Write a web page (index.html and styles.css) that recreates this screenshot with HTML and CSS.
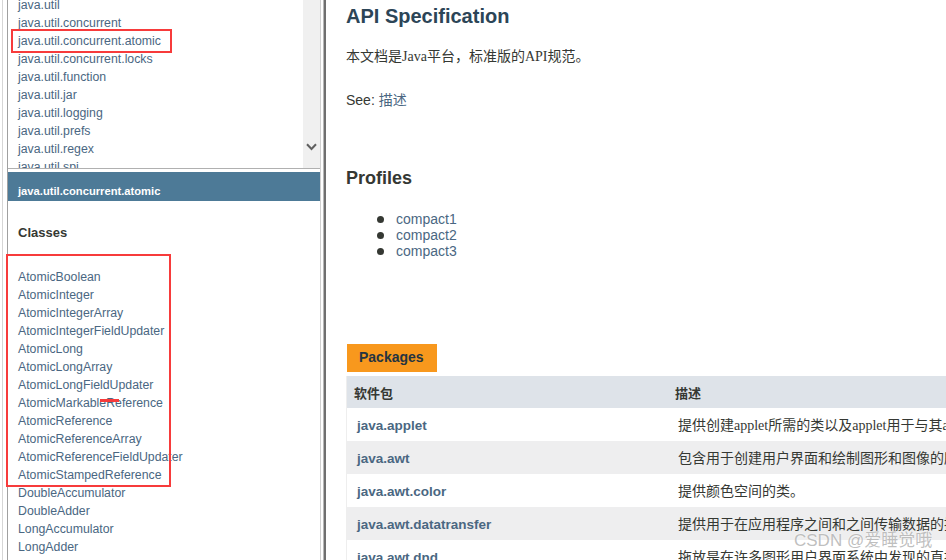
FILE: index.html
```html
<!DOCTYPE html>
<html lang="zh-CN">
<head>
<meta charset="utf-8">
<title>Java Platform SE 8 API</title>
<link rel="stylesheet" href="styles.css">
</head>
<body>
<div class="page">
  <div class="left-frame">
    <div class="panes">
      <div class="pkg-pane">
        <ul class="pkg-list">
          <li><a href="#">java.util</a></li>
          <li><a href="#">java.util.concurrent</a></li>
          <li><a href="#">java.util.concurrent.atomic</a></li>
          <li><a href="#">java.util.concurrent.locks</a></li>
          <li><a href="#">java.util.function</a></li>
          <li><a href="#">java.util.jar</a></li>
          <li><a href="#">java.util.logging</a></li>
          <li><a href="#">java.util.prefs</a></li>
          <li><a href="#">java.util.regex</a></li>
          <li><a href="#">java.util.spi</a></li>
          <li><a href="#">java.util.stream</a></li>
        </ul>
        <div class="scrollbar">
          <svg class="scroll-arrow" width="11" height="8" viewBox="0 0 11 8"><path d="M1 1.2 L5.5 6 L10 1.2" fill="none" stroke="#606060" stroke-width="2"/></svg>
        </div>
      </div>
      <div class="bar">java.util.concurrent.atomic</div>
      <div class="class-pane">
        <h2 class="class-title">Classes</h2>
        <ul class="class-list">
          <li><a href="#">AtomicBoolean</a></li>
          <li><a href="#">AtomicInteger</a></li>
          <li><a href="#">AtomicIntegerArray</a></li>
          <li><a href="#">AtomicIntegerFieldUpdater</a></li>
          <li><a href="#">AtomicLong</a></li>
          <li><a href="#">AtomicLongArray</a></li>
          <li><a href="#">AtomicLongFieldUpdater</a></li>
          <li><a href="#">AtomicMarkableReference</a></li>
          <li><a href="#">AtomicReference</a></li>
          <li><a href="#">AtomicReferenceArray</a></li>
          <li><a href="#">AtomicReferenceFieldUpdater</a></li>
          <li><a href="#">AtomicStampedReference</a></li>
          <li><a href="#">DoubleAccumulator</a></li>
          <li><a href="#">DoubleAdder</a></li>
          <li><a href="#">LongAccumulator</a></li>
          <li><a href="#">LongAdder</a></li>
        </ul>
      </div>
    </div>
  </div>
  <div class="divider"></div>
  <div class="right-frame">
    <h1 class="title">API Specification</h1>
    <p class="intro zh">本文档是Java平台，标准版的API规范。</p>
    <p class="see">See: <a href="#" class="zh-link">描述</a></p>
    <h2 class="profiles-title">Profiles</h2>
    <ul class="profiles">
      <li><a href="#">compact1</a></li>
      <li><a href="#">compact2</a></li>
      <li><a href="#">compact3</a></li>
    </ul>
    <div class="tab"><span>Packages</span></div>
    <table class="summary">
      <thead>
        <tr><th class="col-first">软件包</th><th class="col-last">描述</th></tr>
      </thead>
      <tbody>
        <tr><td class="col-first"><a href="#">java.applet</a></td><td class="col-last">提供创建applet所需的类以及applet用于与其applet上下文进行通信的类。</td></tr>
        <tr><td class="col-first"><a href="#">java.awt</a></td><td class="col-last">包含用于创建用户界面和绘制图形和图像的所有类。</td></tr>
        <tr><td class="col-first"><a href="#">java.awt.color</a></td><td class="col-last">提供颜色空间的类。</td></tr>
        <tr><td class="col-first"><a href="#">java.awt.datatransfer</a></td><td class="col-last">提供用于在应用程序之间和之间传输数据的接口和类。</td></tr>
        <tr><td class="col-first"><a href="#">java.awt.dnd</a></td><td class="col-last">拖放是在许多图形用户界面系统中发现的直接操作手势。</td></tr>
      </tbody>
    </table>
  </div>
</div>
<div class="mark mark-pkg"></div>
<div class="mark mark-classes"></div>
<div class="mark-dash"></div>
<div class="watermark">CSDN @爱睡觉哦</div>
</body>
</html>
```
FILE: styles.css
```css
html, body {
  margin: 0;
  height: 560px;
  overflow: hidden;
}
body {
  position: relative;
  background: #fff;
  color: #353833;
  font-family: "Liberation Sans", Arial, "Noto Sans CJK SC", sans-serif;
}
a {
  color: #4a6782;
  text-decoration: none;
}
.page {
  display: flex;
  height: 560px;
}

/* left frame */
.left-frame {
  width: 321px;
  flex: none;
  display: flex;
  padding-left: 7px;
  box-sizing: border-box;
  background: linear-gradient(to right, #fff 0 2px, #d6d6d6 2px 3px, #fff 3px) no-repeat;
  background-size: 7px 100%;
}
.panes {
  flex: 1;
  min-width: 0;
  display: flex;
  flex-direction: column;
  border-left: 1px solid #a0a0a0;
  border-right: 1px solid #d0d0d0;
}
.pkg-pane {
  flex: none;
  height: 168px;
  display: flex;
  overflow: hidden;
  border-bottom: 1px solid #b0b0b0;
}
.pkg-list {
  flex: 1;
  margin: -4px 0 0;
  padding: 0 0 0 10px;
  list-style: none;
  font-size: 12.3px;
  line-height: 18px;
  white-space: nowrap;
}
.scrollbar {
  width: 17px;
  flex: none;
  background: #f0f0f0;
  display: flex;
  flex-direction: column;
  justify-content: flex-end;
  align-items: center;
  padding-bottom: 17px;
  box-sizing: border-box;
}
.scroll-arrow {
  display: block;
}
.bar {
  flex: none;
  margin-top: 3px;
  height: 29px;
  box-sizing: border-box;
  padding: 13px 0 0 10px;
  background: #4d7a97;
  color: #fff;
  font-size: 11.2px;
  font-weight: bold;
  line-height: 13px;
}
.class-pane {
  flex: 1;
  padding-left: 10px;
}
.class-title {
  margin: 24px 0 0;
  font-size: 13px;
  line-height: 16px;
  font-weight: bold;
}
.class-list {
  margin: 27px 0 0;
  padding: 0;
  list-style: none;
  font-size: 12.3px;
  line-height: 18px;
}

/* divider */
.divider {
  width: 5px;
  flex: none;
  background: linear-gradient(to right, #fff 0 2px, #b8b8b8 2px 3px, #707070 3px 5px);
}

/* right frame */
.right-frame {
  flex: 1;
  min-width: 0;
  overflow: hidden;
  padding: 4px 0 0 20px;
  font-size: 14px;
}
.title {
  margin: 0;
  color: #2c4557;
  font-size: 20px;
  line-height: 24px;
  font-weight: bold;
}
.zh {
  font-family: "Liberation Serif", "Noto Sans CJK SC", serif;
}
.zh-link {
  font-family: "Noto Sans CJK SC", sans-serif;
}
.intro {
  margin: 19px 0 0;
  line-height: 20px;
}
.see {
  margin: 22px 0 0;
  line-height: 20px;
}
.profiles-title {
  margin: 57px 0 0;
  font-size: 18px;
  line-height: 22px;
  font-weight: bold;
}
.profiles {
  margin: 22px 0 0;
  padding: 0 0 0 31px;
  list-style: none;
  line-height: 16px;
}
.profiles li {
  display: flex;
  align-items: center;
}
.profiles li::before {
  content: "";
  width: 7px;
  height: 7px;
  border-radius: 50%;
  background: #353833;
  margin-right: 12px;
}
.tab {
  margin-top: 85px;
  height: 28px;
  display: flex;
}
.tab span {
  margin-left: 1px;
  padding: 4px 13px 0 12px;
  background: #f8981d;
  color: #253441;
  font-size: 14px;
  font-weight: bold;
  line-height: 18px;
}
.summary {
  margin-top: 4px;
  width: 900px;
  table-layout: fixed;
  border-collapse: separate;
  border-spacing: 0;
  border-left: 1px solid #eee;
}
.summary th {
  background: #dee3e9;
  text-align: left;
  font-family: "Noto Sans CJK SC", sans-serif;
  font-size: 13px;
  font-weight: bold;
  line-height: 21px;
  padding: 6px 3px 5px 7px;
  color: #353833;
}
.summary th.col-first {
  width: 321px;
  box-sizing: border-box;
}
.summary td {
  padding: 7px 3px 5px 10px;
  line-height: 21px;
  white-space: nowrap;
  overflow: hidden;
}
.summary td.col-first a {
  font-weight: bold;
  font-size: 13.5px;
}
.summary td.col-last {
  font-family: "Liberation Serif", "Noto Sans CJK SC", serif;
  font-size: 14px;
}
.summary tbody tr:nth-child(even) {
  background: #eeeeef;
}

/* annotations */
.mark {
  position: absolute;
  border: 2px solid #f73b3b;
}
.mark-pkg {
  left: 11px;
  top: 29px;
  width: 157px;
  height: 20px;
}
.mark-classes {
  left: 6px;
  top: 254px;
  width: 161px;
  height: 229px;
}
.mark-dash {
  position: absolute;
  left: 100px;
  top: 399px;
  width: 19px;
  height: 3px;
  background: #f73b3b;
}
.watermark {
  position: absolute;
  left: 794px;
  top: 530px;
  font-family: "Liberation Sans", "Noto Sans CJK SC", sans-serif;
  font-size: 17px;
  line-height: 22px;
  color: rgba(170, 170, 170, 0.75);
  text-shadow: 0 0 2px #fff;
  white-space: nowrap;
}
```
